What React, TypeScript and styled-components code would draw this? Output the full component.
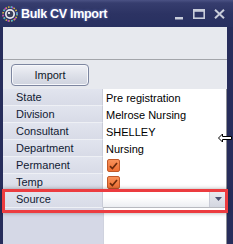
import React from "react";
import styled, { createGlobalStyle } from "styled-components";

const Global = createGlobalStyle`
  html, body { margin: 0; padding: 0; background: #262c58; }
  body { font-family: "Liberation Sans", Arial, sans-serif; }
`;

const Window = styled.div`
  position: relative;
  width: 233px;
  height: 244px;
  overflow: hidden;
  background: #272d5b;
  display: flex;
  flex-direction: column;
`;

const TitleBar = styled.div`
  height: 27px;
  flex: none;
  display: flex;
  align-items: center;
  padding: 0 8px 0 2px;
  background: linear-gradient(#4b5284 0px, #363d6e 3px, #2c3363 14px, #283060 27px);
  box-sizing: border-box;
`;

const Title = styled.div`
  margin-left: 3px;
  color: #ffffff;
  font-weight: bold;
  font-size: 12.5px;
  letter-spacing: -0.3px;
  text-shadow: 0 0 3px rgba(140, 160, 255, 0.6);
  flex: 1;
  padding-top: 1px;
`;

const Controls = styled.div`
  display: flex;
  align-items: center;
  gap: 9px;
  padding-top: 1px;
`;

const Client = styled.div`
  flex: 1;
  margin: 0 6px 0 3px;
  display: flex;
  flex-direction: column;
  background: #e7e9ee;
`;

const TopStrip = styled.div`
  height: 32px;
  flex: none;
  border-bottom: 1px solid #a3a5aa;
`;

const ButtonBar = styled.div`
  height: 29px;
  flex: none;
  display: flex;
  align-items: center;
  padding-left: 8px;
`;

const PushButton = styled.button`
  width: 78px;
  height: 22px;
  margin-top: 1px;
  border: 1px solid #7d86a0;
  border-radius: 4px;
  background: linear-gradient(#f0f1f6, #dcdfe8 55%, #cfd3de);
  box-shadow: inset 0 0 0 1px #f7f8fb;
  font-family: "Liberation Sans", Arial, sans-serif;
  font-size: 11px;
  color: #101828;
  padding: 0;
`;

const Grid = styled.div`
  flex: 1;
  display: grid;
  grid-template-columns: 100px 1fr;
  grid-auto-rows: 17px;
  background: linear-gradient(to right, #d5d8e6 0, #d5d8e6 100px, #cfd2de 100px, #cfd2de 101px, #ffffff 101px);
  border-right: 1px solid #8f9096;
  position: relative;
`;

const Label = styled.div`
  background: linear-gradient(#e1e4ee, #d8dbe7);
  border-bottom: 1px solid #eef0f5;
  border-right: 1px solid #c9ccd8;
  box-sizing: border-box;
  font-size: 11px;
  color: #111a33;
  padding-left: 13px;
  display: flex;
  align-items: center;
`;

const Value = styled.div<{ $combo?: boolean }>`
  box-sizing: border-box;
  font-size: 11px;
  color: #000;
  padding-left: 3px;
  display: flex;
  align-items: center;
  background: ${(p) => (p.$combo ? "linear-gradient(#ffffff 40%, #eceef2)" : "#ffffff")};
  border-bottom: ${(p) => (p.$combo ? "1px solid #b8bac0" : "none")};
  position: relative;
`;

const ComboButton = styled.div`
  position: absolute;
  right: 0;
  top: 0;
  bottom: 0;
  width: 16px;
  background: linear-gradient(#e9ebf1, #d3d6e0);
  border-left: 1px solid #c8cbd6;
  display: flex;
  align-items: center;
  justify-content: center;
`;

const Check = styled.div`
  width: 13px;
  height: 13px;
  box-sizing: border-box;
  border: 1px solid #c1592a;
  border-radius: 2px;
  background: linear-gradient(#f8925a, #ee6f33);
  display: flex;
  align-items: center;
  justify-content: center;
  margin-left: 1px;
`;

const Highlight = styled.div`
  position: absolute;
  left: -1px;
  right: -2px;
  top: 100px;
  height: 24px;
  border: 3px solid #ec3c40;
  box-sizing: border-box;
  box-shadow: 0 0 4px rgba(0, 0, 0, 0.35);
  pointer-events: none;
`;

const Cursor = styled.svg`
  position: absolute;
  left: 218px;
  top: 133px;
`;

const CheckMark = () => (
  <svg width="9" height="8" viewBox="0 0 9 8">
    <path d="M1 4.2 L3.4 6.5 L8 1" fill="none" stroke="#6b2a0c" strokeWidth="1.7" />
  </svg>
);

const AppIcon = () => (
  <svg width="16" height="16" viewBox="0 0 16 16">
    <circle cx="8" cy="8" r="7" fill="none" stroke="#e0c040" strokeWidth="1.6" strokeDasharray="1.5 1.3" />
    <circle cx="8" cy="8" r="7" fill="none" stroke="#c040d0" strokeWidth="1.6" strokeDasharray="1.5 6" strokeDashoffset="3" />
    <circle cx="8" cy="8" r="7" fill="none" stroke="#30b0e0" strokeWidth="1.6" strokeDasharray="1.5 7" strokeDashoffset="9" />
    <circle cx="8" cy="8" r="5" fill="#e8e8ee" />
    <circle cx="8" cy="8" r="3.3" fill="#3a3f5a" />
    <circle cx="7" cy="7" r="1.1" fill="#ffffff" />
  </svg>
);

const rows: { label: string; value?: string; check?: boolean }[] = [
  { label: "State", value: "Pre registration" },
  { label: "Division", value: "Melrose Nursing" },
  { label: "Consultant", value: "SHELLEY" },
  { label: "Department", value: "Nursing" },
  { label: "Permanent", check: true },
  { label: "Temp", check: true },
];

export default function App() {
  return (
    <>
      <Global />
      <Window>
        <TitleBar>
          <AppIcon />
          <Title>Bulk CV Import</Title>
          <Controls>
            <svg width="9" height="12" viewBox="0 0 9 12">
              <rect x="0" y="9" width="8" height="2.5" fill="#c9cdda" />
            </svg>
            <svg width="12" height="10" viewBox="0 0 12 10">
              <rect x="0.8" y="0.8" width="10.4" height="8.4" fill="none" stroke="#c9cdda" strokeWidth="1.6" />
              <rect x="0.8" y="0.8" width="10.4" height="2" fill="#c9cdda" />
            </svg>
            <svg width="11" height="10" viewBox="0 0 11 10">
              <path d="M1 0.8 L10 9.2 M10 0.8 L1 9.2" stroke="#c9cdda" strokeWidth="2" />
            </svg>
          </Controls>
        </TitleBar>
        <Client>
          <TopStrip />
          <ButtonBar>
            <PushButton>Import</PushButton>
          </ButtonBar>
          <Grid>
            {rows.map((r) => (
              <React.Fragment key={r.label}>
                <Label>{r.label}</Label>
                <Value>
                  {r.check ? (
                    <Check>
                      <CheckMark />
                    </Check>
                  ) : (
                    r.value
                  )}
                </Value>
              </React.Fragment>
            ))}
            <Label>Source</Label>
            <Value $combo>
              <ComboButton>
                <svg width="7" height="4" viewBox="0 0 7 4">
                  <path d="M0 0 H7 L3.5 4 Z" fill="#4a5070" />
                </svg>
              </ComboButton>
            </Value>
            <Highlight />
          </Grid>
        </Client>
        <Cursor width="14" height="10" viewBox="0 0 14 10">
          <path d="M0.5 5 L4.5 1 V3.5 H13.5 V6.5 H4.5 V9 Z" fill="#ffffff" stroke="#000000" strokeWidth="1" />
        </Cursor>
      </Window>
    </>
  );
}
